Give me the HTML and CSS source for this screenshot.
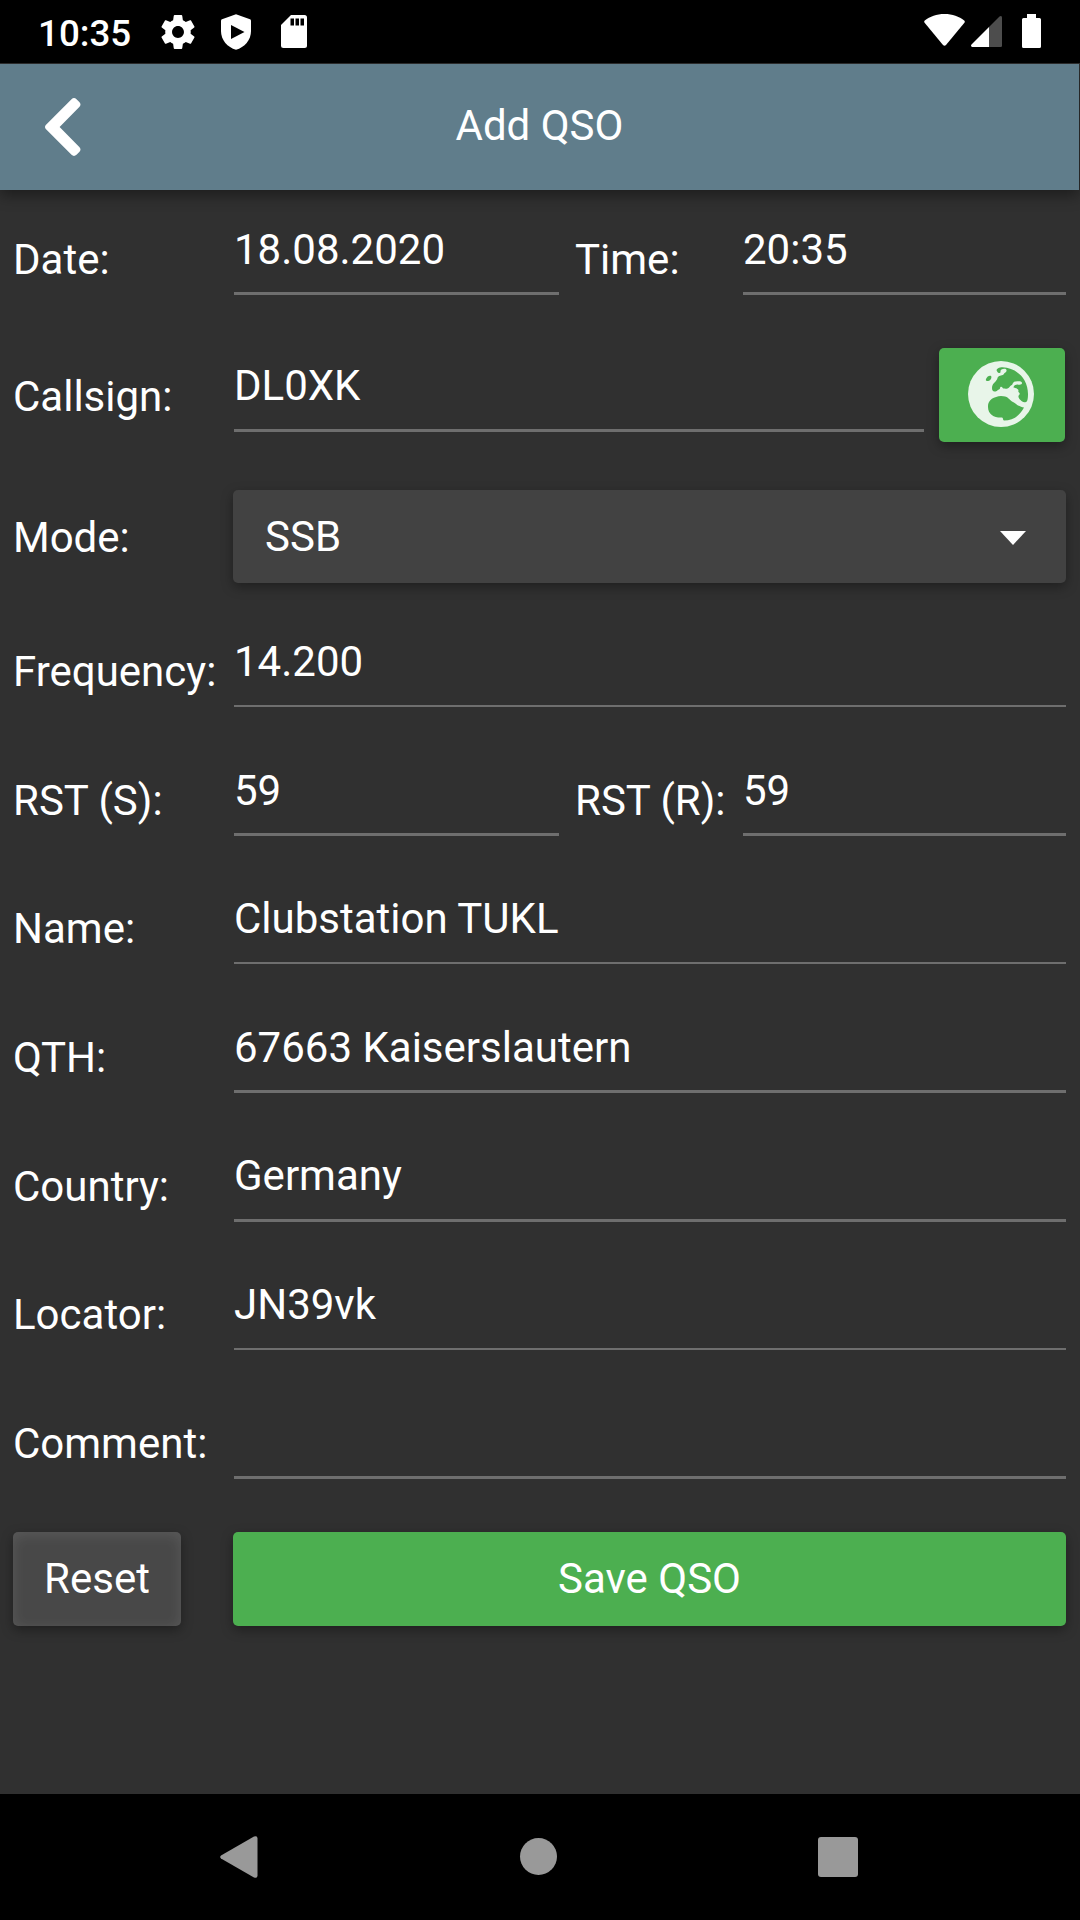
FILE: index.html
```html
<!DOCTYPE html>
<html lang="en">
<head>
<meta charset="utf-8">
<title>Add QSO</title>
<link rel="stylesheet" href="styles.css">
</head>
<body>
<div class="screen">
  <div class="statusbar">
    <span class="clock">10:35</span>
    <svg class="s-gear" viewBox="2 2 20 20" width="34" height="34" fill="#fff"><path d="M19.43 12.98c.04-.32.07-.64.07-.98s-.03-.66-.07-.98l2.11-1.65c.19-.15.24-.42.12-.64l-2-3.46c-.12-.22-.39-.3-.61-.22l-2.49 1c-.52-.4-1.08-.73-1.69-.98l-.38-2.65C14.46 2.18 14.25 2 14 2h-4c-.25 0-.46.18-.49.42l-.38 2.65c-.61.25-1.17.59-1.69.98l-2.49-1c-.23-.09-.49 0-.61.22l-2 3.46c-.13.22-.07.49.12.64l2.11 1.65c-.04.32-.07.65-.07.98s.03.66.07.98l-2.11 1.65c-.19.15-.24.42-.12.64l2 3.46c.12.22.39.3.61.22l2.49-1c.52.4 1.08.73 1.69.98l.38 2.65c.03.24.24.42.49.42h4c.25 0 .46-.18.49-.42l.38-2.65c.61-.25 1.17-.59 1.69-.98l2.49 1c.23.09.49 0 .61-.22l2-3.46c.12-.22.07-.49-.12-.64l-2.11-1.65zM12 15.500c-1.930 0-3.500-1.570-3.500-3.500s1.570-3.500 3.500-3.500 3.500 1.570 3.500 3.500-1.570 3.500-3.500 3.500z"/></svg>
    <svg class="s-shield" viewBox="0 0 30 36" width="30" height="36"><path fill="#fff" d="M15 .3 29 5.200Q30 5.600 30 6.800V17C30 26 23.500 33.500 15 35.700 6.500 33.500 0 26 0 17V6.800Q0 5.600 1 5.200Z"/><path d="M10 11v14L23.500 18z"/></svg>
    <svg class="s-card" viewBox="0 0 26 33" width="26" height="33"><path fill="#fff" d="M10 0H23.500Q26 0 26 2.500V30.500Q26 33 23.500 33H2.500Q0 33 0 30.500V10z"/><path d="M9.500 3.500h3.500v7H9.500zM14.500 3.500H18v7h-3.500zM19.500 3.500H23v7h-3.500z"/></svg>
    <span class="grow"></span>
    <svg class="s-wifi" viewBox="0 0 41 32" width="41" height="32"><path fill="#fff" d="M.8 6.500C6 2.500 12.500 0 20.500 0S35 2.500 40.200 6.500Q41.300 7.500 40.400 8.700L22 31Q20.500 32.500 19 31L.6 8.700Q-.3 7.500.8 6.500Z"/></svg>
    <svg class="s-cell" viewBox="0 0 31 31" width="31" height="31"><path fill="#fff" d="M18 11V31H1.200Q-.8 30.500.5 28.500Z"/><path fill="#4d4d4d" d="M18 11 28.500.5Q30.500-.7 31 1.300V29.800Q31 31 29.800 31H18z"/></svg>
    <svg class="s-batt" viewBox="0 0 19 34" width="19" height="34"><path fill="#fff" d="M5 0h9v4h3.500Q19 4 19 5.500v27Q19 34 17.500 34h-16Q0 34 0 32.500v-27Q0 4 1.500 4H5z"/></svg>
  </div>
  <header class="appbar">
    <svg class="back" viewBox="0 0 36 58" width="36" height="58" fill="#fff"><path d="M.8 26.900 26.500 1.200q2.500-2.300 5 0l2.800 2.800q2.400 2.500 0 5L14.600 29 34.300 49q2.400 2.500 0 5l-2.800 2.800q-2.500 2.300-5 0L.8 31.100q-1.600-2.100 0-4.200z"/></svg>
    <h1 class="title">Add QSO</h1>
  </header>
  <main class="form">
    <div class="row r-date"><label class="label">Date:</label><div class="field half">18.08.2020</div><label class="label second">Time:</label><div class="field">20:35</div></div>
    <div class="row r-call raised"><label class="label">Callsign:</label><div class="field">DL0XK</div>
      <button class="btn lookup"><svg viewBox="0 0 66 66" width="66" height="66"><circle cx="33" cy="33" r="33" fill="#e8f5e9"/><g fill="#4caf50"><path d="M28.500 10C28.500 7.500 31 6.300 34.500 6.300 49 7 60 18 60 33c0 4-.5 8-2 8-2 1-4.500-.5-5.500-2-2-2-3-4-1-5.500 1-2-2-2-1-4 0-2-3-2.500-5-3 0-2 2-3 4-3 3 .5 4.500 0 4.500-1.500 0-2-3-2-6-1.500-3 0-3 2-4 3.500-2 .5-3 3.500-4.500 3.500-2 .5-3 0-4 0-1 0-1.500-2.500-3-1.500-1 1 0 2-1.500 2.500-1 0-1.500 1.500-3.500 2-2.500.5-3.500-1-3.500-3.500 0-5 5-6.500 5.500-10 1-3 4-2 6-3.500 1-2 3.500-2 3-4.500-.5-2-3.500-1.500-5-.5-2 1 0 3-2 3.500-1.500.5-2.500-1.500-3-3z"/><path d="M18 18c1-3 4-4 5-3s0 4.500-3 5c-2 0-2.500-.5-2-2z"/><path d="M20 46c-.5-7 6-10.500 13-11 7 0 7.500 3 11 5.500 3 1 4 3 6 4 2 .5 4 2 6 2-4 8-11 13-20 13-1.500-.5-.5-2.500-2-3-7 .5-14-2.500-14-10.500z"/></g></svg></button></div>
    <div class="row r-mode"><label class="label">Mode:</label><div class="select"><span>SSB</span><svg class="caret" viewBox="0 0 26 14" width="26" height="14"><path fill="#fff" d="M0 0h26L13 14z"/></svg></div></div>
    <div class="row r-freq"><label class="label">Frequency:</label><div class="field thin">14.200</div></div>
    <div class="row r-rst"><label class="label">RST (S):</label><div class="field half">59</div><label class="label second">RST (R):</label><div class="field">59</div></div>
    <div class="row r-name"><label class="label">Name:</label><div class="field thin">Clubstation TUKL</div></div>
    <div class="row r-qth"><label class="label">QTH:</label><div class="field">67663 Kaiserslautern</div></div>
    <div class="row r-country raised"><label class="label">Country:</label><div class="field">Germany</div></div>
    <div class="row r-loc"><label class="label">Locator:</label><div class="field thin">JN39vk</div></div>
    <div class="row r-comment"><label class="label">Comment:</label><div class="field"></div></div>
    <div class="actions"><button class="btn reset">Reset</button><button class="btn save">Save QSO</button></div>
  </main>
  <nav class="navbar">
    <svg viewBox="0 0 38 42" width="38" height="42"><path fill="#999" d="M1 19.500 34 .6Q37.500-.8 37.500 2.500v37Q37.500 42.800 34 41.400L1 22.500Q-.6 21 1 19.500Z"/></svg>
    <svg viewBox="0 0 38 38" width="38" height="38"><circle cx="19.500" cy="18.500" r="18.500" fill="#999"/></svg>
    <svg viewBox="0 0 40 40" width="40" height="40"><rect width="40" height="40" rx="3" fill="#999"/></svg>
  </nav>
</div>
</body>
</html>
```
FILE: styles.css
```css
* { box-sizing: border-box; }
body {
  margin: 0;
  background: #303030;
  color: #fff;
  font: 42px/50px Roboto, sans-serif;
}
.screen {
  width: 1080px;
  height: 1920px;
  display: flex;
  flex-direction: column;
  overflow: hidden;
}
.statusbar {
  height: 64px;
  display: flex;
  align-items: flex-start;
  background: #000;
  border-bottom: 1px solid #303030;
  padding: 0 38px;
}
.clock { font-size: 36.75px; font-weight: 500; line-height: 44px; width: 124px; margin-top: 12px; }
.s-gear { margin: 15px 26px 0 -1px; }
.s-shield { margin: 14px 30px 0 0; }
.s-card { margin-top: 15px; }
.grow { flex: 1; }
.s-wifi { margin: 14px 6px 0 0; }
.s-cell { margin: 16px 20px 0 0; }
.s-batt { margin: 14px 1px 0 0; }
.appbar {
  height: 126px;
  margin-right: 1px;
  display: grid;
  grid-template-columns: 126px 1fr 126px;
  align-items: center;
  background: #607d8b;
  box-shadow: 0 5px 14px rgba(0, 0, 0, .42);
}
.back { margin: 0 0 1px 45px; }
.title { margin: 0 0 2px; font-size: 42px; font-weight: 400; text-align: center; }
.form { flex: 1; padding: 0 14px 0 13px; }
.row { display: flex; height: 105px; }
.label { width: 221px; flex: none; padding-top: 45px; }
.second { width: 184px; padding-left: 16px; }
.field { flex: 1; padding-top: 35px; border-bottom: 3px solid #6e6e6e; }
.half { flex: none; width: 325px; }
.thin { border-bottom-width: 2px; }
.raised .label { padding-top: 44.500px; }
.raised .field { padding-top: 34px; }
.btn {
  border: 0;
  padding: 0;
  border-radius: 5px;
  color: #fff;
  font: inherit;
  background: #4caf50;
  box-shadow: 0 4px 12px rgba(0, 0, 0, .35);
}
.r-call { margin-top: 32px; }
.lookup {
  width: 126px;
  height: 94px;
  margin: 21px 1px 0 15px;
  padding: 0 3px 2px 0;
  display: flex;
  align-items: center;
  justify-content: center;
}
.r-mode { margin-top: 58px; height: 93px; }
.r-mode .label { width: 220px; padding-top: 23px; }
.select {
  flex: 1;
  display: flex;
  align-items: center;
  justify-content: space-between;
  padding: 1px 40px 0 32px;
  border-radius: 5px;
  background: #424242;
  box-shadow: 0 4px 12px rgba(0, 0, 0, .35);
}
.caret { margin-top: 2px; }
.r-freq { margin-top: 19px; }
.r-rst, .r-qth, .r-country, .r-comment { margin-top: 24px; }
.r-name, .r-loc { margin-top: 23px; }
.actions { display: flex; gap: 52px; margin-top: 53px; height: 94px; }
.reset {
  width: 168px;
  background: #484848;
  box-shadow: inset 0 3px 14px rgba(255, 255, 255, .1), 0 4px 12px rgba(0, 0, 0, .35);
}
.save { flex: 1; }
.navbar {
  height: 126px;
  display: flex;
  align-items: center;
  justify-content: space-between;
  padding: 0 222px 0 220px;
  background: #000;
}
```
